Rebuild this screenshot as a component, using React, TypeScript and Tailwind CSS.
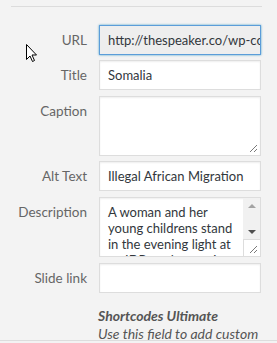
import React from 'react';

const font = { fontFamily: 'Lato, "Open Sans", sans-serif' };

function Grip() {
  return (
    <svg width="8" height="8" viewBox="0 0 8 8" className="absolute right-[3px] bottom-[3px]">
      <line x1="1" y1="8" x2="8" y2="1" stroke="#7a7a7a" strokeWidth="1" />
      <line x1="5" y1="8" x2="8" y2="5" stroke="#7a7a7a" strokeWidth="1" />
    </svg>
  );
}

function Row({ label, children, className = '' }: { label: string; children: React.ReactNode; className?: string }) {
  return (
    <div className={`flex ${className}`}>
      <div className="w-[87px] shrink-0 h-[30px] leading-[30px] text-right text-[13.5px] text-[#666]">{label}</div>
      <div className="ml-[12px] w-[162px]">{children}</div>
    </div>
  );
}

export default function App() {
  return (
    <div className="relative w-[277px] h-[343px] bg-[#f3f3f3] overflow-hidden" style={font}>
      <div className="h-[340px] overflow-hidden">
        <div className="mt-[6px] ml-[11px] w-[251px] h-px bg-[#dcdcdc]" />

        <Row label="URL" className="mt-[18px]">
          <div className="h-[30px] px-[8px] leading-[28px] text-[13px] text-[#32373c] bg-[#eeeeee] border border-[#5b9dd9] shadow-[0_0_2px_rgba(30,140,190,0.8)] whitespace-nowrap overflow-hidden">
            http://thespeaker.co/wp-content/uploads
          </div>
        </Row>

        <Row label="Title" className="mt-[5px]">
          <div className="h-[30px] px-[8px] leading-[28px] text-[13px] text-[#32373c] bg-white border border-[#dddddd] shadow-[inset_0_1px_2px_rgba(0,0,0,0.07)]">
            Somalia
          </div>
        </Row>

        <Row label="Caption" className="mt-[6px]">
          <div className="relative h-[60px] bg-white border border-[#dddddd] shadow-[inset_0_1px_2px_rgba(0,0,0,0.07)]">
            <Grip />
          </div>
        </Row>

        <Row label="Alt Text" className="mt-[5px]">
          <div className="h-[30px] px-[8px] leading-[28px] text-[13px] text-[#32373c] bg-white border border-[#dddddd] shadow-[inset_0_1px_2px_rgba(0,0,0,0.07)] whitespace-nowrap overflow-hidden">
            Illegal African Migration
          </div>
        </Row>

        <Row label="Description" className="mt-[6px]">
          <div className="relative flex h-[60px] bg-white border border-[#dddddd] shadow-[inset_0_1px_2px_rgba(0,0,0,0.07)] overflow-hidden">
            <div className="flex-1 pl-[8px] pt-[6px] text-[13px] leading-[16px] text-[#32373c] whitespace-nowrap">
              A woman and her
              <br />
              young childrens stand
              <br />
              in the evening light at
              <br />
              an IDP settlement in
            </div>
            <div className="w-[17px] shrink-0 flex flex-col bg-[#f1f1f1]">
              <div className="flex justify-center pt-[6px]">
                <div className="w-0 h-0 border-l-[4px] border-r-[4px] border-b-[4px] border-l-transparent border-r-transparent border-b-[#a3a3a3]" />
              </div>
              <div className="flex justify-center mt-[22px]">
                <div className="w-0 h-0 border-l-[4px] border-r-[4px] border-t-[4px] border-l-transparent border-r-transparent border-t-[#505050]" />
              </div>
              <div className="relative mt-auto h-[17px] bg-white border-l border-t border-[#dddddd]">
                <Grip />
              </div>
            </div>
          </div>
        </Row>

        <Row label="Slide link" className="mt-[6px]">
          <div className="h-[30px] bg-white border border-[#dddddd] shadow-[inset_0_1px_2px_rgba(0,0,0,0.07)]" />
        </Row>

        <div className="ml-[98px] mt-[14px] text-[14px] leading-[18px] text-[#555]">
          <div className="font-bold italic">Shortcodes Ultimate</div>
          <div className="italic whitespace-nowrap">Use this field to add custom</div>
        </div>
      </div>
      <div className="h-px bg-[#dddddd]" />

      <svg width="12" height="19" viewBox="0 0 12 19" className="absolute left-[26px] top-[44px]">
        <path d="M0.5 0.5 L0.5 15.5 L4 12 L6.5 17.5 L8.5 16.5 L6 11 L10.5 11 Z" fill="#fff" stroke="#000" strokeWidth="1" strokeLinejoin="miter" />
      </svg>
    </div>
  );
}
